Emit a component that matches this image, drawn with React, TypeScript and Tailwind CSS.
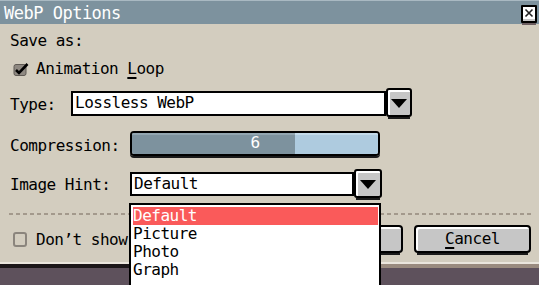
import React from "react";

const F = "font-['DejaVu_Sans_Mono',monospace] text-[16px] tracking-[-0.5px] leading-[18px]";

function ArrowBtn({ w, h }: { w: number; h: number }) {
  return (
    <div
      className="flex flex-col shrink-0"
      style={{ width: w, height: h }}
    >
      <div className="flex-1 border-2 border-black bg-[#c6c6c6] rounded-[3px] flex items-center justify-center shadow-[inset_2px_2px_0_#ffffff]">
        <svg width="16" height="10" viewBox="0 0 16 10">
          <polygon points="0,1 16,1 8,10" fill="#000" />
        </svg>
      </div>
      <div className="h-[2px] mx-[2px] bg-[#1a1a1a]" />
    </div>
  );
}

export default function App() {
  return (
    <div className={`relative w-[539px] h-[285px] overflow-hidden bg-[#5e515c] ${F}`}>
      <div className="flex flex-col bg-[#d3cdbf]">
        {/* title bar */}
        <div className="h-[24px] bg-[#7d929e] border-t border-[#a9b9c2] flex items-center justify-between pl-[4px] pr-[2px]">
          <span className="text-white text-[17px]">WebP Options</span>
          <svg width="16" height="20" viewBox="0 0 16 20" className="mt-[4px]">
            <rect x="0" y="0" width="16" height="18" rx="1" fill="#000" />
            <rect x="2" y="2" width="12" height="12" fill="#fff" />
            <rect x="2" y="14" width="12" height="2" fill="#c6c6c6" />
            <path d="M4.5 4.5 L11.5 11.5 M11.5 4.5 L4.5 11.5" stroke="#222" strokeWidth="1.6" />
            <rect x="1" y="18" width="14" height="2" fill="#6b5d60" />
          </svg>
        </div>

        {/* body */}
        <div className="flex flex-col pl-[10px] pr-[8px] pb-[7px] text-black">
          <div className="mt-[8px] h-[18px]">Save as:</div>

          <div className="mt-[10px] h-[18px] flex items-center">
            <svg width="16" height="15" viewBox="0 0 16 15" className="ml-[3px]">
              <rect x="1" y="2.5" width="12" height="11" rx="2" fill="#8f8982" stroke="#5f5a54" />
              <path d="M3 8 L6 11 L14.5 2" stroke="#000" strokeWidth="2.6" fill="none" />
            </svg>
            <span className="ml-[7px]">
              Animation <span className="underline decoration-2 underline-offset-[3px]">L</span>oop
            </span>
          </div>

          {/* Type */}
          <div className="mt-[10px] h-[31px] flex items-start">
            <div className="w-[61px] mt-[8px]">Type:</div>
            <div className="mt-[3px] w-[315px] h-[25px] border-2 border-black bg-white pl-[2px] pt-[1px]">
              Lossless WebP
            </div>
            <ArrowBtn w={26} h={31} />
          </div>

          {/* Compression */}
          <div className="mt-[12px] h-[25px] flex items-start">
            <div className="w-[120px] mt-[6px]">Compression:</div>
            <div className="w-[250px] h-[25px] border-2 border-black rounded-[4px] overflow-hidden flex relative shadow-[0_2px_0_#1a1a1a]">
              <div className="w-[163px] h-full bg-[#7d929e] shadow-[inset_0_2px_0_#93a6b1]" />
              <div className="flex-1 h-full bg-[#aecbdf] shadow-[inset_0_2px_0_#c4dbea]" />
              <div className="absolute inset-0 flex items-center justify-center text-white pb-[1px]">6</div>
            </div>
          </div>

          {/* Image Hint */}
          <div className="mt-[13px] h-[31px] flex items-start">
            <div className="w-[120px] mt-[7px]">Image Hint:</div>
            <div className="mt-[3px] w-[224px] h-[24px] border-2 border-black bg-white pl-[2px] pt-[1px]">
              Default
            </div>
            <ArrowBtn w={28} h={31} />
          </div>

          {/* dashed separator */}
          <div className="mt-[13px] h-[2px] -ml-[1px] bg-[repeating-linear-gradient(90deg,#a3998c_0_4px,transparent_4px_7px)]" />

          {/* buttons row */}
          <div className="mt-[10px] h-[30px] flex items-center">
            <div className="ml-[3px] w-[14px] h-[15px] border-2 border-[#8b857d] rounded-[3px] mb-[2px]" />
            <span className="ml-[9px]">Don’t show</span>
            <div className="ml-auto flex gap-[11px]">
              <div className="w-[107px] h-[30px] flex flex-col">
                <div className="flex-1 border-2 border-black rounded-[4px] bg-[#c6c6c6] shadow-[inset_2px_2px_0_#ffffff] flex items-center justify-center">
                  <span><span className="underline decoration-2 underline-offset-[3px]">O</span>K</span>
                </div>
                <div className="h-[2px] mx-[3px] bg-[#1a1a1a]" />
              </div>
              <div className="w-[117px] h-[30px] flex flex-col">
                <div className="flex-1 border-2 border-black rounded-[4px] bg-[#c6c6c6] shadow-[inset_2px_2px_0_#ffffff] flex items-center justify-center">
                  <span><span className="underline decoration-2 underline-offset-[3px]">C</span>ancel</span>
                </div>
                <div className="h-[2px] mx-[3px] bg-[#1a1a1a]" />
              </div>
            </div>
          </div>
        </div>
      </div>
      {/* bottom edge */}
      <div className="h-[2px] bg-[#ebe6dd]" />
      <div className="h-[4px] flex">
        <div className="w-[130px] bg-[#1c1719]" />
        <div className="flex-1 bg-[#9a8b7f]" />
      </div>

      {/* dropdown popup */}
      <div className="absolute left-[129px] top-[203px] w-[252px] h-[92px] border-2 border-black bg-white pl-[2px] pt-[2px] pr-[1px]">
        <div className="h-[18px] bg-[#fa5a5a] text-white">Default</div>
        <div className="h-[18px]">Picture</div>
        <div className="h-[18px]">Photo</div>
        <div className="h-[18px]">Graph</div>
      </div>
    </div>
  );
}
